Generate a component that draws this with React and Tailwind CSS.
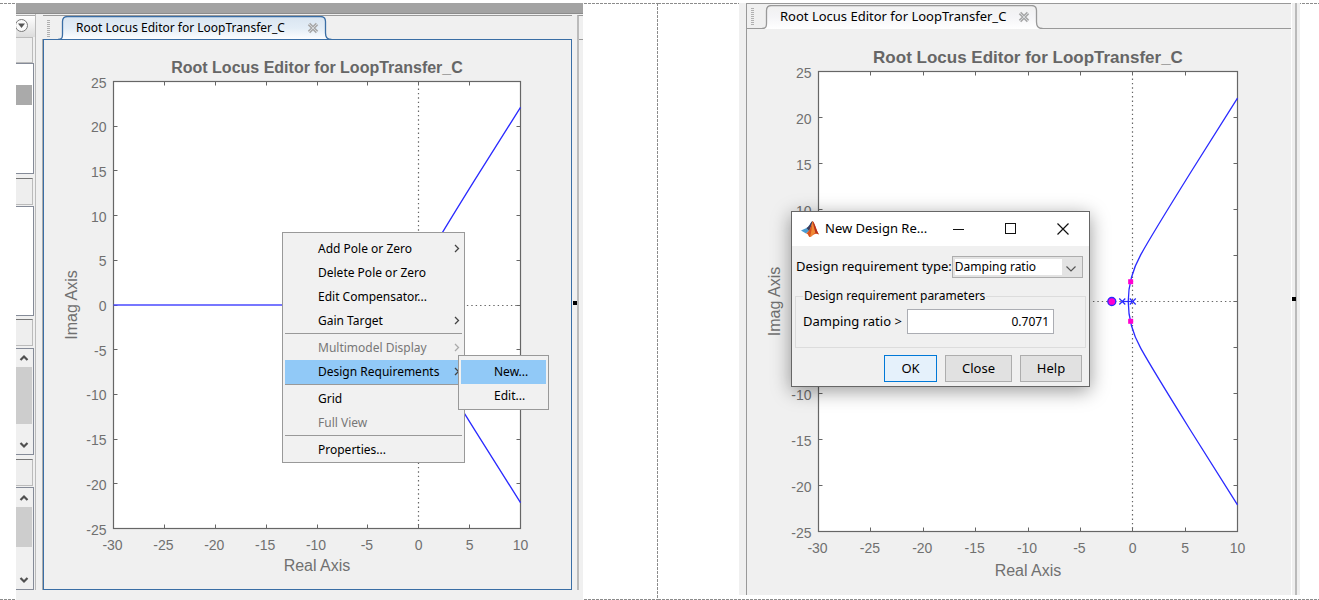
import React from "react";

const UPPER = [
  [10, 22.1],
  [5.48, 13.94],
  [3.38, 10.1],
  [1.6, 6.8],
  [0.77, 5.1],
  [-0.05, 3.42],
  [-0.43, 1.5],
  [-0.43, 0],
];

function locusPath(X, Y, sign) {
  const p = UPPER.map(([x, y]) => `${X(x)} ${Y(y * sign)}`);
  return `M${p[0]} L${p[1]} C${p[2]} ${p[3]} ${p[4]} C${p[5]} ${p[6]} ${p[7]}`;
}

const X_TICKS = [-30, -25, -20, -15, -10, -5, 0, 5, 10];
const Y_TICKS = [25, 20, 15, 10, 5, 0, -5, -10, -15, -20, -25];

function RootLocusPlot({ width, height, box, titleSize, titleY, ylabelX, xlabelY, children, dotsFrom }) {
  const { l, t, r, b } = box;
  const X = (v) => l + ((v + 30) / 40) * (r - l);
  const Y = (v) => t + ((25 - v) / 50) * (b - t);
  const snap = (v) => Math.floor(v) + 0.5;
  const cx = (l + r) / 2;
  const cy = (t + b) / 2;
  return (
    <svg
      viewBox={`0 0 ${width} ${height}`}
      className="block w-full font-['Liberation_Sans',Arial,sans-serif]"
      role="img"
      aria-label="Root locus"
    >
      <rect x={l} y={t} width={r - l} height={b - t} fill="#fff" />
      <line x1={snap(X(0))} x2={snap(X(0))} y1={t + 7} y2={b} stroke="#666" strokeWidth="1.2" strokeDasharray="1.4 3" />
      <line x1={X(dotsFrom)} x2={r} y1={snap(Y(0))} y2={snap(Y(0))} stroke="#666" strokeWidth="1.2" strokeDasharray="1.4 3" />
      <rect x={l} y={t} width={r - l} height={b - t} fill="none" stroke="#666" strokeWidth="1.2" />
      <g stroke="#666" strokeWidth="1">
        {X_TICKS.map((v) => (
          <path key={v} d={`M${snap(X(v))} ${t}v4M${snap(X(v))} ${b}v-4`} />
        ))}
        {Y_TICKS.map((v) => (
          <path key={v} d={`M${l} ${snap(Y(v))}h4M${r} ${snap(Y(v))}h-4`} />
        ))}
      </g>
      <g fill="#707070" fontSize="14">
        {X_TICKS.map((v) => (
          <text key={v} x={X(v) - (v < 0 ? 1 : 0)} y={b + 21} textAnchor="middle">
            {v}
          </text>
        ))}
        {Y_TICKS.map((v) => (
          <text key={v} x={l - 7} y={Y(v) + 6} textAnchor="end">
            {v}
          </text>
        ))}
      </g>
      <g fill="#707070" fontSize="16" textAnchor="middle">
        <text x={cx} y={xlabelY}>
          Real Axis
        </text>
        <text x={ylabelX} y={cy} transform={`rotate(-90 ${ylabelX} ${cy})`}>
          Imag Axis
        </text>
      </g>
      <text x={cx} y={titleY} fill="#666" fontSize={titleSize} fontWeight="bold" textAnchor="middle">
        Root Locus Editor for LoopTransfer_C
      </text>
      <g fill="none" stroke="#2a2aff" strokeWidth="1.3">
        <path d={locusPath(X, Y, 1)} />
        <path d={locusPath(X, Y, -1)} />
      </g>
      {children && children(X, Y)}
    </svg>
  );
}

function Grip() {
  return (
    <span className="mt-1 ml-1 h-[17px] w-[3px] shrink-0 bg-[repeating-linear-gradient(180deg,#b0b0b0_0_1px,transparent_1px_2px)]" />
  );
}

function TabOutline({ active }) {
  const right = active ? 267.5 : 274.5;
  const id = active ? "tab-active" : "tab-idle";
  const top = `4.5 20 4.5 17V5.5Q4.5 .5 9.5 .5H${right - 5}Q${right} .5 ${right} 5.5V17C${right} 20 ${right + 1}`;
  return (
    <svg viewBox="0 0 282 24" className="absolute bottom-0 left-0 h-6 w-[282px]" aria-hidden="true">
      <defs>
        <linearGradient id={id} x1="0" y1="0" x2="0" y2="1">
          <stop offset="0" stopColor={active ? "#d9e5f1" : "#f0f0f0"} />
          <stop offset="0.5" stopColor={active ? "#e3edf6" : "#f5f5f7"} />
          <stop offset="1" stopColor="#ffffff" />
        </linearGradient>
      </defs>
      <path d={`M0 24C5 24 ${top} 24 ${right + 6} 24Z`} fill={`url(#${id})`} />
      <path
        d={`M0 23.5C5 23.5 ${top} 23.5 ${right + 6} 23.5`}
        fill="none"
        stroke={active ? "#3a6ea5" : "#999999"}
        strokeWidth="1.3"
      />
    </svg>
  );
}

function TabStrip({ active }) {
  return (
    <div className={"relative flex border-t border-[#999] " + (active ? "h-[25px]" : "h-[26px]")}>
      <Grip />
      <span className={"absolute inset-x-0 bottom-0 h-px " + (active ? "bg-[#3a6ea5]" : "bg-[#999]")} />
      <div className="relative ml-2 h-full" role="tab" aria-selected="true">
        <TabOutline active={active} />
        <div className="relative flex h-full items-center pl-[18px]">
          <span
            className={"whitespace-nowrap text-black " + (active ? "w-[231px] text-[12px]" : "w-[238px] text-[13px]")}
          >
            Root Locus Editor for LoopTransfer_C
          </span>
          <button aria-label="Close tab" className="h-3 w-3">
            <svg viewBox="0 0 12 12" className="h-3 w-3">
              <path d="M2 2l8 8M10 2l-8 8" stroke="#a8a8a8" strokeWidth="3.4" />
              <path d="M2 2l8 8M10 2l-8 8" stroke="#d4d7da" strokeWidth="1" />
            </svg>
          </button>
        </div>
      </div>
    </div>
  );
}

function SideHead() {
  return <div className="mr-[2px] h-[27px] border border-l-0 border-[#bbb] border-t-[#777] bg-[#eee]" />;
}

function Chevron({ up }) {
  return (
    <svg viewBox="0 0 10 10" className="ml-[3px] h-[10px] w-[10px]" aria-hidden="true">
      <path d={up ? "M1.5 7L5 3.5L8.5 7" : "M1.5 3L5 6.5L8.5 3"} fill="none" stroke="#505050" strokeWidth="2.2" />
    </svg>
  );
}

function SideBar() {
  return (
    <aside className="flex w-5 shrink-0 flex-col border-r border-[#bbb]">
      <div className="mt-px flex h-[22px] items-center border-t border-[#aaa] bg-gradient-to-b from-white to-[#dcdcdc]">
        <button aria-label="Panel menu" className="-mt-px h-[14px] w-[14px]">
          <svg viewBox="0 0 14 14" className="h-[14px] w-[14px]">
            <circle cx="5.5" cy="6.5" r="6" fill="#fafafa" stroke="#777" />
            <path d="M2 4.5h7L5.5 9z" fill="#555" />
          </svg>
        </button>
      </div>
      <div className="mr-[2px] h-[26px] border border-l-0 border-[#bbb] bg-[#eee]" />
      <div className="mr-px h-[111px] border border-l-0 border-[#858b98] bg-white pt-[21px]">
        <div className="mr-px h-5 bg-[#aaa]" />
      </div>
      <div className="mt-1">
        <SideHead />
      </div>
      <div className="mt-px mr-px h-[110px] border border-l-0 border-[#858b98] bg-white" />
      <div className="mt-[3px]">
        <SideHead />
      </div>
      <div className="mt-[2px] mr-px flex h-[107px] flex-col border border-l-0 border-[#858b98] pt-1 pb-1">
        <Chevron up />
        <div className="mt-1 mr-px mb-auto h-[57px] bg-[#cdcdcd]" />
        <Chevron />
      </div>
      <div className="mt-1">
        <SideHead />
      </div>
      <div className="mt-px mr-px flex h-[103px] flex-col border border-l-0 border-[#858b98] pt-[5px] pb-1">
        <Chevron up />
        <div className="mt-1 mr-px mb-auto h-10 bg-[#cdcdcd]" />
        <Chevron />
      </div>
    </aside>
  );
}

function MenuItem({ label, arrow, disabled, selected }) {
  return (
    <button
      role="menuitem"
      disabled={disabled}
      className={
        "flex h-6 w-full items-center justify-between pr-px pl-[33px] text-left text-[12px] whitespace-nowrap " +
        (selected ? "bg-[#91c9f7] " : "") +
        (disabled ? "text-[#777]" : "text-black")
      }
    >
      <span>{label}</span>
      {arrow && (
        <svg viewBox="0 0 8 10" className="h-[10px] w-2" aria-hidden="true">
          <path d="M2 1L5.5 4.5L2 8" fill="none" stroke={disabled ? "#aaa" : "#444"} strokeWidth="1.3" />
        </svg>
      )}
    </button>
  );
}

function Separator() {
  return <div role="separator" className="mb-[2px] h-px border-b border-[#999]" />;
}

function ContextMenu() {
  return (
    <div role="menu" className="absolute top-[192px] left-[238px] w-[183px] border border-[#999] bg-[#f1f1f1] px-[2px] pt-1">
      <MenuItem label="Add Pole or Zero" arrow />
      <MenuItem label="Delete Pole or Zero" />
      <MenuItem label="Edit Compensator..." />
      <MenuItem label="Gain Target" arrow />
      <Separator />
      <MenuItem label="Multimodel Display" arrow disabled />
      <MenuItem label="Design Requirements" arrow selected />
      <Separator />
      <MenuItem label="Grid" />
      <MenuItem label="Full View" disabled />
      <Separator />
      <MenuItem label="Properties..." />
      <div role="menu" className="absolute top-[122px] left-[175px] w-[91px] border border-[#999] bg-[#f1f1f1] px-[2px] pt-1 pb-px">
        <MenuItem label="New..." selected />
        <MenuItem label="Edit..." />
      </div>
    </div>
  );
}

function MatlabLogo() {
  return (
    <svg viewBox="0 0 18 18" className="h-[18px] w-[18px]" aria-hidden="true">
      <path d="M0 10.5L5.5 8L8 10.5L5 13.5Z" fill="#4a9bd0" />
      <path d="M5.5 8C8 7 9 3 11.5 1L8.5 10.5L5 13.5L8 10.5Z" fill="#24507f" />
      <path d="M11.5 1C9.5 3 9 7 5.5 8L8 10.5C9.5 9 10.5 5 11.5 1Z" fill="#3d3d5c" />
      <path d="M11.5 1C10 6 9 11 5 13.5C7 13 7.5 17 9 17C12 16 13 12 18 14.5C15.5 11 14 3 11.5 1Z" fill="#d9541e" />
      <path d="M11.5 1C11 6 10.5 12 9 17C12 16 12 13 14.5 13C13 9 12.5 4 11.5 1Z" fill="#f08a35" />
      <path d="M11.5 1C14 3 15.5 11 18 14.5C16.5 13.5 15.5 13 14.5 13C13.5 9 12.5 4 11.5 1Z" fill="#b5301c" />
    </svg>
  );
}

function RequirementDialog() {
  return (
    <div
      role="dialog"
      aria-label="New Design Requirement"
      className="absolute top-[182px] left-[44px] w-[299px] border border-[#666] bg-[#f0f0f0] text-[13px] text-black shadow-[0_4px_18px_rgba(0,0,0,0.4)]"
    >
      <div className="flex h-[34px] items-center bg-white pl-[9px]">
        <MatlabLogo />
        <span className="ml-[6px] w-[120px]">New Design Re...</span>
        <div className="flex flex-1 justify-between pr-5 pl-2">
          <button aria-label="Minimize">
            <svg viewBox="0 0 12 12" className="h-3 w-3"><path d="M0 6.5h11" stroke="#111" /></svg>
          </button>
          <button aria-label="Maximize">
            <svg viewBox="0 0 12 12" className="h-3 w-3"><rect x=".5" y=".5" width="10" height="10" fill="none" stroke="#111" /></svg>
          </button>
          <button aria-label="Close">
            <svg viewBox="0 0 12 12" className="h-3 w-3"><path d="M.5 .5l11 11M11.5 .5l-11 11" stroke="#111" strokeWidth="1.2" /></svg>
          </button>
        </div>
      </div>
      <div className="flex items-center pt-[10px] pr-[6px] pl-1">
        <label htmlFor="req-type" className="shrink-0 whitespace-nowrap">Design requirement type:</label>
        <div className="relative h-[22px] flex-1 border border-[#adadad] bg-[#e3e3e3] p-[2px]">
          <select id="req-type" className="block h-4 w-[107px] appearance-none bg-white text-[12px] leading-4 outline-none">
            <option>Damping ratio</option>
          </select>
          <svg viewBox="0 0 10 6" className="pointer-events-none absolute top-[9px] right-[6px] h-[6px] w-[10px]" aria-hidden="true">
            <path d="M.5 .5L5 5L9.5 .5" fill="none" stroke="#555" strokeWidth="1.2" />
          </svg>
        </div>
      </div>
      <fieldset className="mx-[3px] mt-[10px] h-[60px] border border-[#dcdcdc] px-[7px]">
        <legend className="h-4 px-px text-[12px] leading-4">Design requirement parameters</legend>
        <div className="mt-[5px] flex items-center">
          <label htmlFor="req-ratio" className="w-[104px] whitespace-nowrap">Damping ratio &gt;</label>
          <input id="req-ratio" defaultValue="0.7071" className="h-[25px] w-[147px] border border-[#abadb3] bg-white pr-1 text-right text-[12px]" />
        </div>
      </fieldset>
      <div className="flex justify-end gap-2 pt-[7px] pr-[7px] pb-1">
        <button className="h-[27px] w-[53px] border border-[#0078d7] bg-[#e5f1fb]">OK</button>
        <button className="h-[27px] w-[67px] border border-[#adadad] bg-[#e1e1e1]">Close</button>
        <button className="h-[27px] w-[62px] border border-[#adadad] bg-[#e1e1e1]">Help</button>
      </div>
    </div>
  );
}

function Cross({ x, y }) {
  return <path d={`M${x - 3} ${y - 3}l6 6M${x + 3} ${y - 3}l-6 6`} stroke="#2a2aff" strokeWidth="1.2" />;
}

function DashedRules() {
  return (
    <>
      <span className="absolute inset-x-0 top-0 h-px bg-[repeating-linear-gradient(90deg,#8c8c8c_0_3px,transparent_3px_4px)]" />
      <span className="absolute inset-x-0 bottom-0 h-px bg-[repeating-linear-gradient(90deg,#8c8c8c_0_3px,transparent_3px_4px)]" />
    </>
  );
}

export default function App() {
  return (
    <main className="grid grid-cols-[658fr_661fr] overflow-hidden bg-white pt-[3px] font-['Noto_Sans','Open_Sans',sans-serif]">
      <section className="relative pr-[75px] pl-4">
        <DashedRules />
        <span className="absolute inset-y-0 right-0 w-px bg-[repeating-linear-gradient(180deg,#8c8c8c_0_3px,transparent_3px_4px)]" />
        <div className="relative bg-[#f0f0f0] pb-[10px]">
          <div className="h-[11px] border-b border-[#8c8c8c] bg-[#a3a3a3]" />
          <div className="flex">
            <SideBar />
            <div className="ml-[7px] min-w-0 flex-1 pt-px">
              <TabStrip active />
              <div className="relative -mt-px border border-[#3a6ea5] shadow-[-1px_0_0_#aaa]">
                <RootLocusPlot
                  width={527}
                  height={549}
                  box={{ l: 69.5, t: 41.5, r: 476.5, b: 488.5 }}
                  titleSize={16}
                  titleY={33}
                  ylabelX={33}
                  xlabelY={531}
                  dotsFrom={-13}
                >
                  {(X, Y) => <path d={`M${X(-30)} ${Y(0)}H${X(-13)}`} stroke="#4a4aff" strokeWidth="1.6" />}
                </RootLocusPlot>
                <ContextMenu />
              </div>
            </div>
            <div className="mt-px ml-[5px] w-[6px] shrink-0 overflow-hidden border-t border-l-2 border-t-[#999] border-l-[#bbb]">
              <div className="h-6 border-b border-[#999]">
                <Grip />
              </div>
            </div>
          </div>
          <span className="absolute top-[298px] right-[6px] h-1 w-1 bg-black" />
        </div>
      </section>
      <section className="relative pr-[19px] pl-[81px]">
        <DashedRules />
        <div className="relative flex bg-[#f0f0f0] pl-[7px]">
          <div className="min-w-0 flex-1 border-l border-[#999]">
            <TabStrip />
            <div className="relative">
              <RootLocusPlot
                width={544}
                height={566}
                box={{ l: 71.5, t: 42.5, r: 490.5, b: 502.5 }}
                titleSize={17}
                titleY={34}
                ylabelX={33}
                xlabelY={547}
                dotsFrom={-8}
              >
                {(X, Y) => (
                  <>
                    <path d={`M${X(-1)} ${Y(0)}H${X(0)}`} stroke="#2a2aff" strokeWidth="1.2" />
                    <Cross x={X(-1)} y={Y(0)} />
                    <Cross x={X(0)} y={Y(0)} />
                    <circle cx={X(-2)} cy={Y(0)} r="4" fill="#ff00d0" stroke="#2a2aff" strokeWidth="1.3" />
                    <rect x={X(-0.2) - 2.5} y={Y(2.15) - 2.5} width="5" height="5" fill="#ff00d0" />
                    <rect x={X(-0.2) - 2.5} y={Y(-2.15) - 2.5} width="5" height="5" fill="#ff00d0" />
                  </>
                )}
              </RootLocusPlot>
              <RequirementDialog />
            </div>
          </div>
          <div className="w-[9px] shrink-0 border-r-[3px] border-l border-r-[#f0f0f0] border-l-white">
            <div className="ml-[3px] h-full border-l-2 border-[#bbb]">
              <div className="h-[26px] border-b border-[#999]" />
            </div>
          </div>
          <span className="absolute top-[294px] right-1 h-1 w-1 bg-black" />
        </div>
      </section>
    </main>
  );
}
